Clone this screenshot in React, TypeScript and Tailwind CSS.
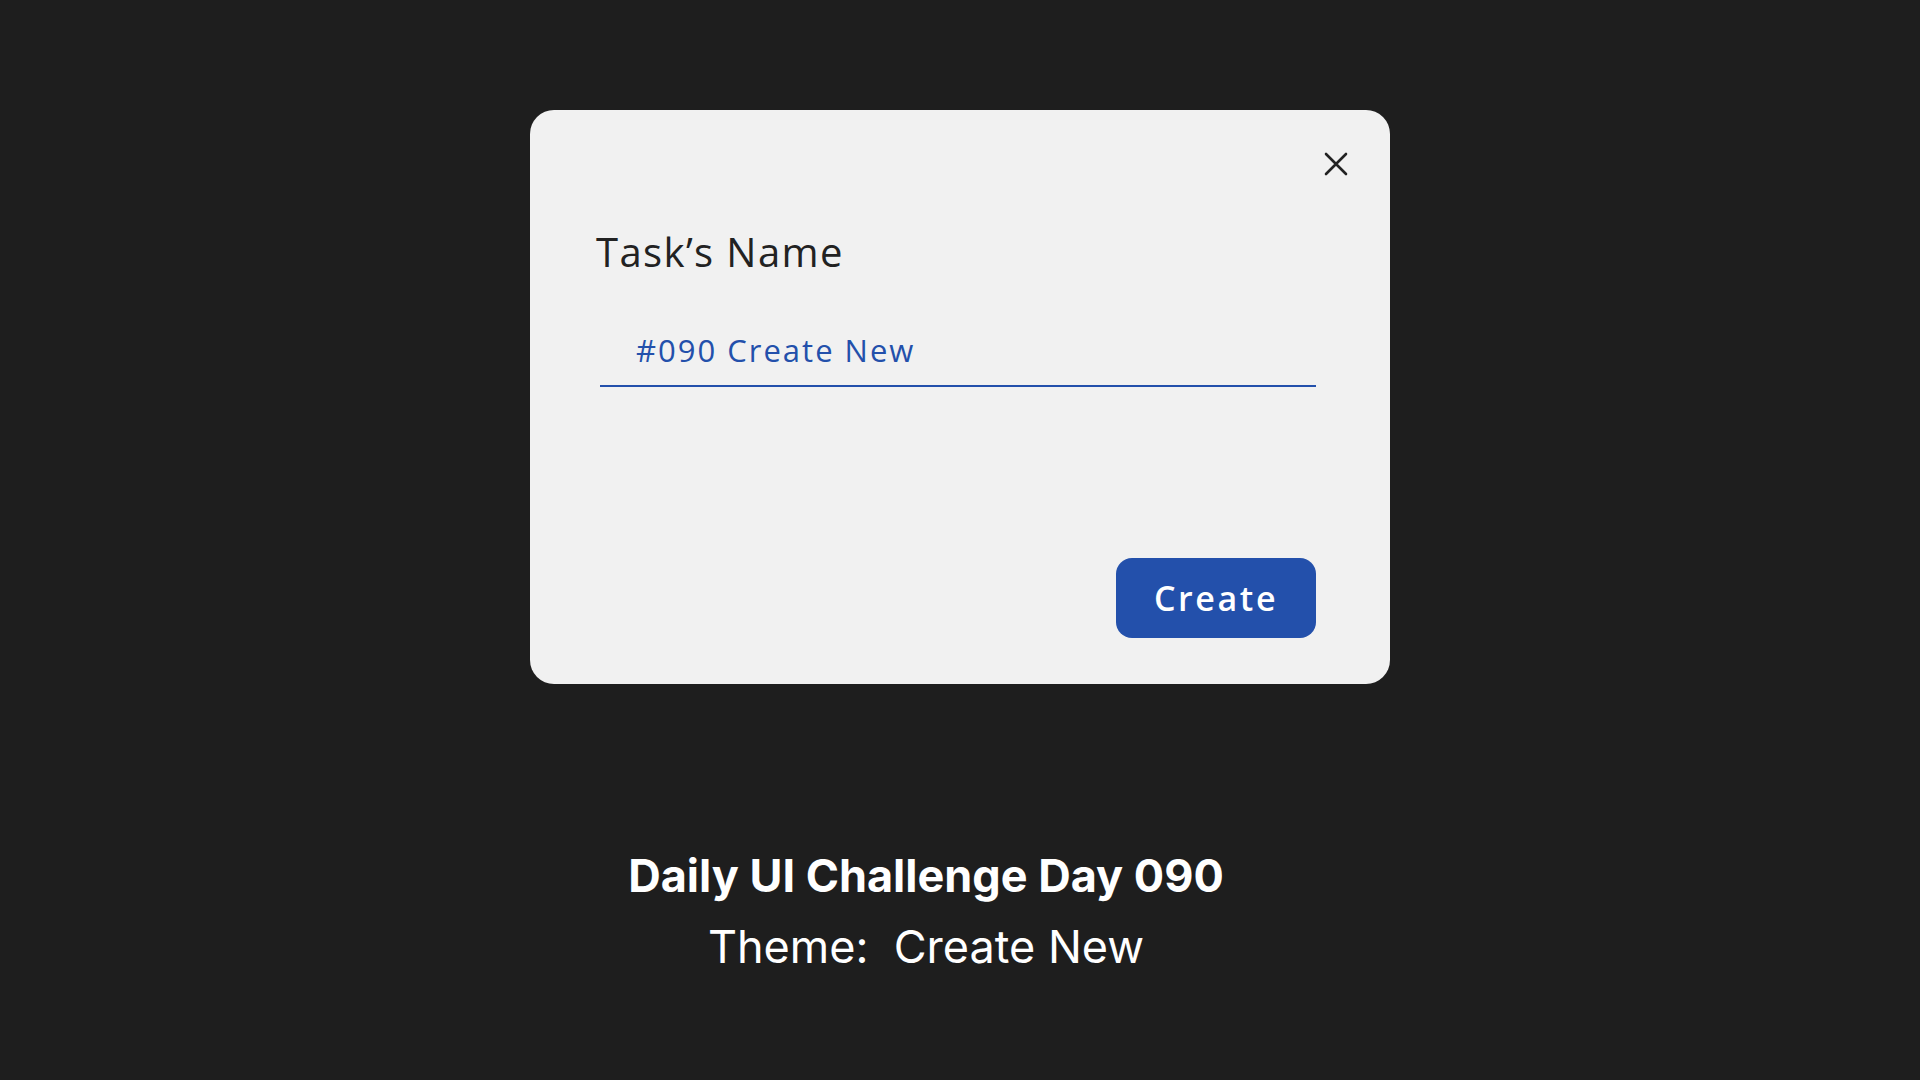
import React, { useState } from 'react';

const CloseIcon: React.FC = () => (
  <svg width="24" height="24" viewBox="0 0 24 24" fill="none">
    <path d="M2 2L22 22M22 2L2 22" stroke="#222222" strokeWidth="2.6" strokeLinecap="round" />
  </svg>
);

const App: React.FC = () => {
  const [taskName, setTaskName] = useState('#090 Create New');

  return (
    <div className="min-h-screen w-full bg-[#1e1e1e] flex flex-col items-center pt-[110px]" style={{ fontFamily: '"Open Sans", "Noto Sans", sans-serif' }}>
      {/* Modal card */}
      <div className="w-[860px] h-[574px] rounded-[24px] bg-[#f1f1f1] flex flex-col">
        <div className="flex justify-end pt-[42px] pr-[42px]">
          <button className="w-[24px] h-[24px] flex items-center justify-center">
            <CloseIcon />
          </button>
        </div>

        <div className="flex flex-col flex-1 pl-[66px] pr-[74px] pb-[46px]">
          <label className="mt-[56px] text-[40px] leading-none text-[#222222] font-normal tracking-[1.4px]">
            Task’s Name
          </label>

          <div className="mt-[57px] ml-[4px]">
            <input
              value={taskName}
              onChange={(e) => setTaskName(e.target.value)}
              className="w-full bg-transparent outline-none border-b-2 border-[#2350ab] pl-[36px] pb-[14px] text-[31px] leading-none text-[#2350ab] tracking-[2px]"
            />
          </div>

          <div className="mt-auto flex justify-end">
            <button className="w-[200px] h-[80px] rounded-[16px] bg-[#2350ab] text-white text-[34px] font-semibold leading-none tracking-[2.6px]">
              Create
            </button>
          </div>
        </div>
      </div>

      {/* Caption */}
      <div className="mt-[169px] mr-[68px] flex flex-col items-center text-white" style={{ fontFamily: 'Inter, "Noto Sans", sans-serif' }}>
        <h1 className="text-[45px] leading-none font-bold">Daily UI Challenge Day 090</h1>
        <p className="mt-[26px] text-[45px] leading-none font-normal whitespace-pre">Theme:  Create New</p>
      </div>
    </div>
  );
};

export default App;
